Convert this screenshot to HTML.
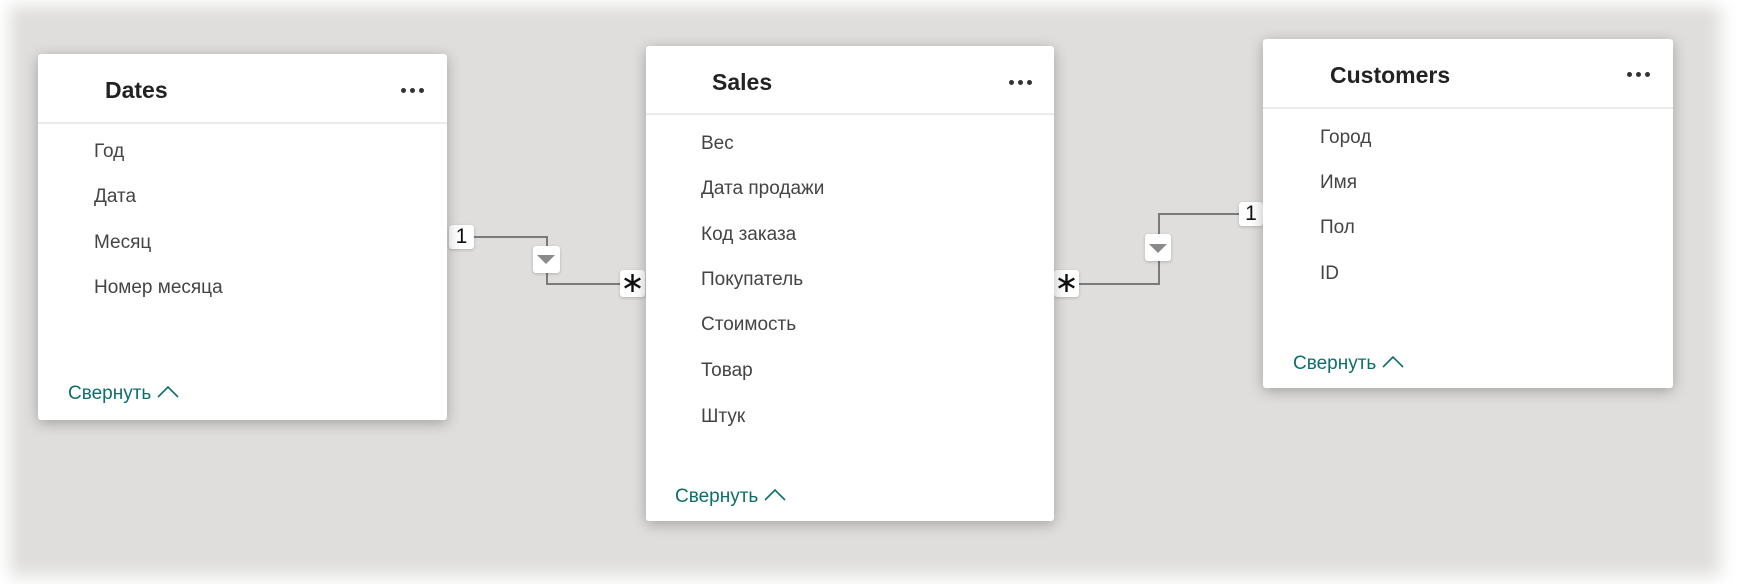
<!DOCTYPE html>
<html><head><meta charset="utf-8"><style>
*{margin:0;padding:0;box-sizing:border-box}
body{width:1738px;height:584px;background:#fff;position:relative;overflow:hidden;font-family:"Segoe UI","Liberation Sans","DejaVu Sans",sans-serif}
.bg{position:absolute;left:0;top:0;width:1738px;height:584px;background:#dfdedc;box-shadow:inset 14px 10px 16px -4px #fff, inset -22px -12px 18px -4px #fff}
.card{position:absolute;background:#fff;border-radius:3px;box-shadow:0 3px 14px rgba(0,0,0,.28)}
.t{position:absolute;font-weight:bold;font-size:23px;color:#222;line-height:30px}
.sep{position:absolute;left:0;right:0;height:2px;background:#ebebeb}
.f{position:absolute;font-size:19px;color:#444;line-height:26px;white-space:nowrap}
.c{position:absolute;font-size:19px;color:#0d6f6c;line-height:26px;white-space:nowrap}
.dots{position:absolute;width:24px;height:6px}
.dots i{position:absolute;top:0;width:5px;height:5px;border-radius:50%;background:#333}
.box{position:absolute;background:#fff;border-radius:3px;box-shadow:0 1px 3px rgba(0,0,0,.2);font-family:"Liberation Sans",sans-serif;color:#111;text-align:center}
.ln{position:absolute;background:#7a7a7a}
.tri{position:absolute;width:0;height:0;border-left:9px solid transparent;border-right:9px solid transparent;border-top:9px solid #8a8a8a}
</style></head><body>
<div class="bg"></div>

<!-- connectors -->
<div class="ln" style="left:474px;top:236px;width:73px;height:2px"></div>
<div class="ln" style="left:546px;top:236px;width:2px;height:48px"></div>
<div class="ln" style="left:546px;top:283px;width:76px;height:2px"></div>
<div class="box" style="left:449px;top:225px;width:25px;height:24px;font-size:21px;line-height:24px">1</div>
<div class="box" style="left:533px;top:246px;width:27px;height:27px"><div class="tri" style="left:4px;top:9px"></div></div>
<div class="box" style="left:620px;top:270px;width:25px;height:27px"><svg width="25" height="27"><g stroke="#111" stroke-width="2.4" stroke-linecap="butt"><path d="M12.5 4 V22"/><path d="M4.7 8.5 L20.3 17.5"/><path d="M4.7 17.5 L20.3 8.5"/></g></svg></div>

<div class="ln" style="left:1079px;top:283px;width:80px;height:2px"></div>
<div class="ln" style="left:1158px;top:213px;width:2px;height:72px"></div>
<div class="ln" style="left:1158px;top:213px;width:82px;height:2px"></div>
<div class="box" style="left:1239px;top:202px;width:24px;height:24px;font-size:21px;line-height:24px">1</div>
<div class="box" style="left:1145px;top:234px;width:26px;height:27px"><div class="tri" style="left:4px;top:10px"></div></div>
<div class="box" style="left:1054px;top:270px;width:25px;height:27px"><svg width="25" height="27"><g stroke="#111" stroke-width="2.4"><path d="M12.5 4 V22"/><path d="M4.7 8.5 L20.3 17.5"/><path d="M4.7 17.5 L20.3 8.5"/></g></svg></div>

<!-- Dates -->
<div class="card" style="left:38px;top:54px;width:409px;height:366px">
 <div class="t" style="left:67px;top:21px">Dates</div>
 <div class="dots" style="left:363px;top:34px"><i style="left:0"></i><i style="left:9px"></i><i style="left:18px"></i></div>
 <div class="sep" style="top:68px"></div>
 <div class="f" style="left:56px;top:85px">Год</div>
 <div class="f" style="left:56px;top:130px">Дата</div>
 <div class="f" style="left:56px;top:176px">Месяц</div>
 <div class="f" style="left:56px;top:221px">Номер месяца</div>
 <div class="c" style="left:30px;top:327px">Свернуть <svg width="22" height="14" style="vertical-align:1px"><path d="M1 13 L11 3 L21 13" fill="none" stroke="#0d6f6c" stroke-width="1.6"/></svg></div>
</div>

<!-- Sales -->
<div class="card" style="left:646px;top:46px;width:408px;height:475px">
 <div class="t" style="left:66px;top:21px">Sales</div>
 <div class="dots" style="left:363px;top:34px"><i style="left:0"></i><i style="left:9px"></i><i style="left:18px"></i></div>
 <div class="sep" style="top:67px"></div>
 <div class="f" style="left:55px;top:85px">Вес</div>
 <div class="f" style="left:55px;top:130px">Дата продажи</div>
 <div class="f" style="left:55px;top:176px">Код заказа</div>
 <div class="f" style="left:55px;top:221px">Покупатель</div>
 <div class="f" style="left:55px;top:266px">Стоимость</div>
 <div class="f" style="left:55px;top:312px">Товар</div>
 <div class="f" style="left:55px;top:358px">Штук</div>
 <div class="c" style="left:29px;top:438px">Свернуть <svg width="22" height="14" style="vertical-align:1px"><path d="M1 13 L11 3 L21 13" fill="none" stroke="#0d6f6c" stroke-width="1.6"/></svg></div>
</div>

<!-- Customers -->
<div class="card" style="left:1263px;top:39px;width:410px;height:349px">
 <div class="t" style="left:67px;top:21px">Customers</div>
 <div class="dots" style="left:364px;top:33px"><i style="left:0"></i><i style="left:9px"></i><i style="left:18px"></i></div>
 <div class="sep" style="top:68px"></div>
 <div class="f" style="left:57px;top:86px">Город</div>
 <div class="f" style="left:57px;top:131px">Имя</div>
 <div class="f" style="left:57px;top:176px">Пол</div>
 <div class="f" style="left:57px;top:222px">ID</div>
 <div class="c" style="left:30px;top:312px">Свернуть <svg width="22" height="14" style="vertical-align:1px"><path d="M1 13 L11 3 L21 13" fill="none" stroke="#0d6f6c" stroke-width="1.6"/></svg></div>
</div>
</body></html>
